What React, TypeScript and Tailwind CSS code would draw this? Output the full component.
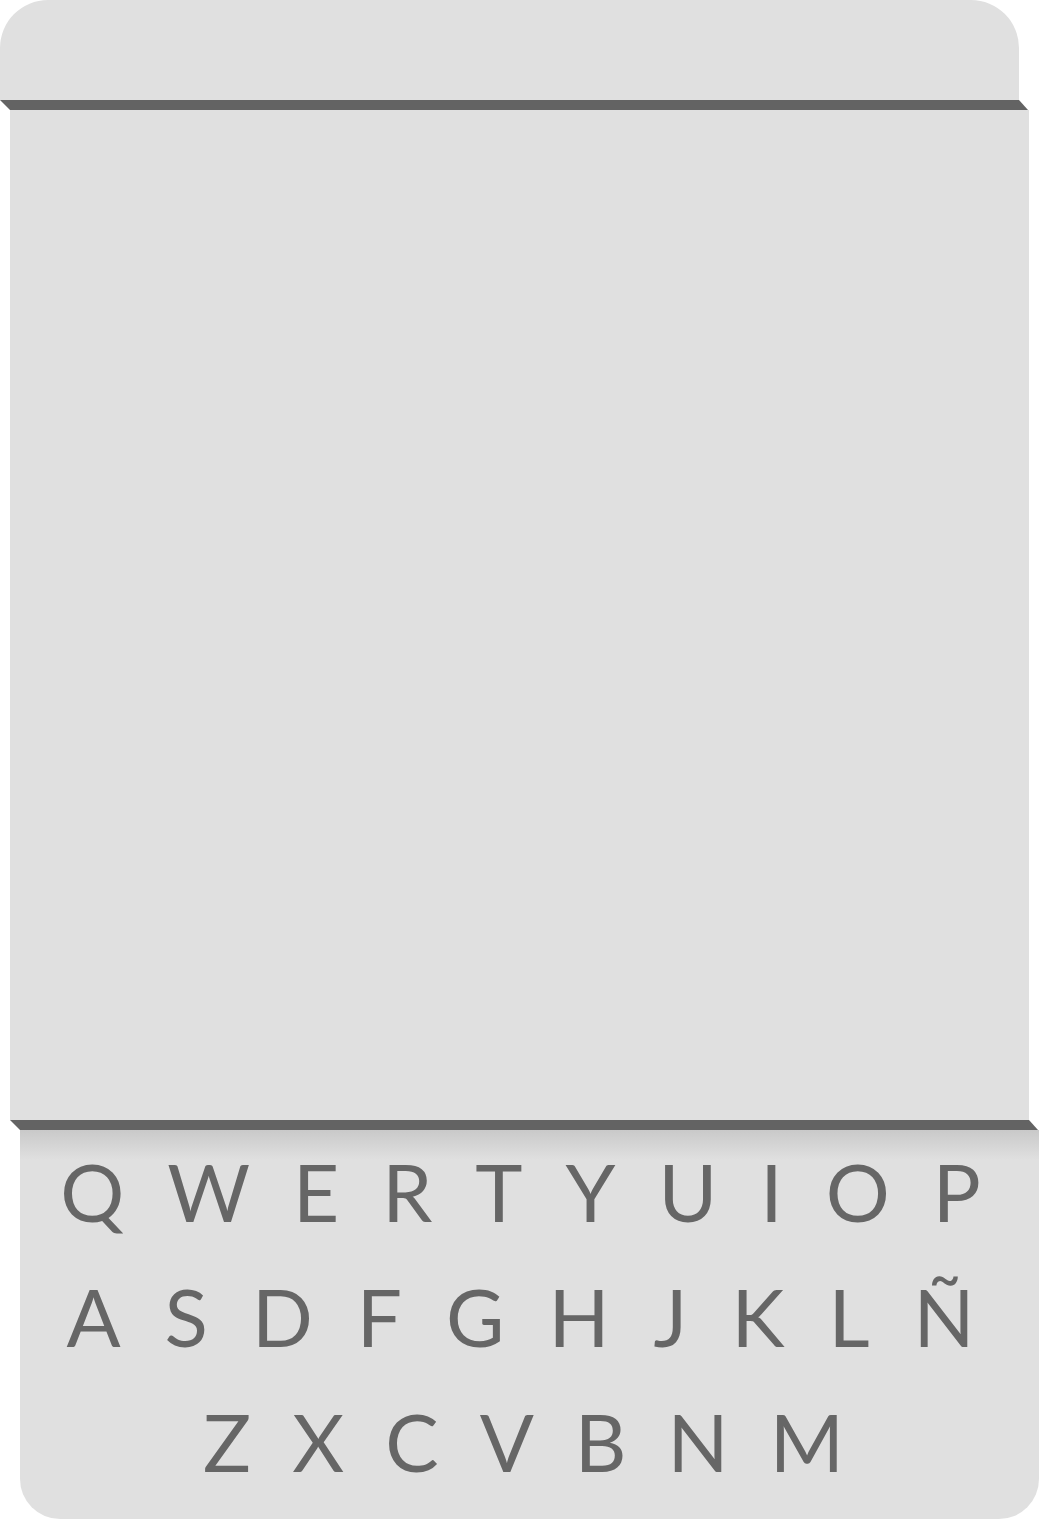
import React from "react";

const rows = [
  { letters: ["Q", "W", "E", "R", "T", "Y", "U", "I", "O", "P"], cls: "flex justify-center gap-[43px]" },
  { letters: ["A", "S", "D", "F", "G", "H", "J", "K", "L", "Ñ"], cls: "flex justify-center gap-[44px]" },
  { letters: ["Z", "X", "C", "V", "B", "N", "M"], cls: "flex justify-center gap-[41px] pl-[6px]" },
];

export default function App() {
  return (
    <div className="w-[1046px] h-[1519px] bg-white flex flex-col overflow-hidden">
      <div className="w-[1019px] h-[100px] bg-[#e0e0e0] rounded-t-[48px]" />
      <div className="w-[1028px] h-[10px] bg-[#636363] [clip-path:polygon(0_0,1019px_0,100%_100%,10px_100%)]" />
      <div className="ml-[10px] w-[1019px] h-[1010px] bg-[#e0e0e0]" />
      <div className="ml-[10px] w-[1028px] h-[10px] bg-[#636363] [clip-path:polygon(0_0,1019px_0,100%_100%,10px_100%)]" />
      <div className="ml-[20px] w-[1019px] h-[389px] rounded-b-[40px] bg-[linear-gradient(to_bottom,#c9c9c9_0px,#e0e0e0_30px)] pt-[21px] pr-[18px] flex flex-col gap-[45px] font-['Lato',sans-serif] font-normal text-[80px] leading-[80px] text-[#666666]">
        {rows.map((row, i) => (
          <div key={i} className={row.cls}>
            {row.letters.map((l) => (
              <span key={l}>{l}</span>
            ))}
          </div>
        ))}
      </div>
    </div>
  );
}
